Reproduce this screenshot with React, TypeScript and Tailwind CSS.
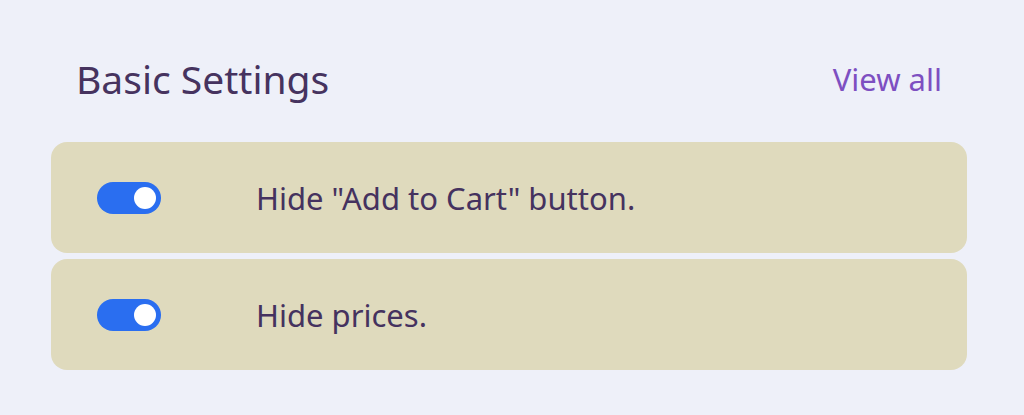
import React from "react";

function Toggle() {
  return (
    <div className="flex h-[32px] w-[64px] shrink-0 items-center justify-end rounded-full bg-[#2a6ef0] pr-[5px]">
      <div className="h-[22px] w-[22px] rounded-full bg-white" />
    </div>
  );
}

function Row({ label }: { label: string }) {
  return (
    <div className="flex h-[111px] items-center rounded-[16px] bg-[#dfdabd] pl-[46px]">
      <Toggle />
      <span className="ml-[95px] text-[31px] leading-[40px] text-[#45325f]">{label}</span>
    </div>
  );
}

export default function App() {
  return (
    <div
      className="min-h-[415px] w-[1024px] bg-[#eef0f9] pl-[51px] pr-[57px] pt-[52px]"
      style={{ fontFamily: '"Noto Sans", "Open Sans", sans-serif' }}
    >
      <div className="flex items-center justify-between px-[25px]">
        <h2 className="text-[39px] leading-[54px] text-[#46335f]">Basic Settings</h2>
        <a className="text-[31px] leading-[54px] text-[#7d4fc1]">View all</a>
      </div>
      <div className="mt-[36px] flex flex-col gap-[6px]">
        <Row label={'Hide "Add to Cart" button.'} />
        <Row label="Hide prices." />
      </div>
    </div>
  );
}
